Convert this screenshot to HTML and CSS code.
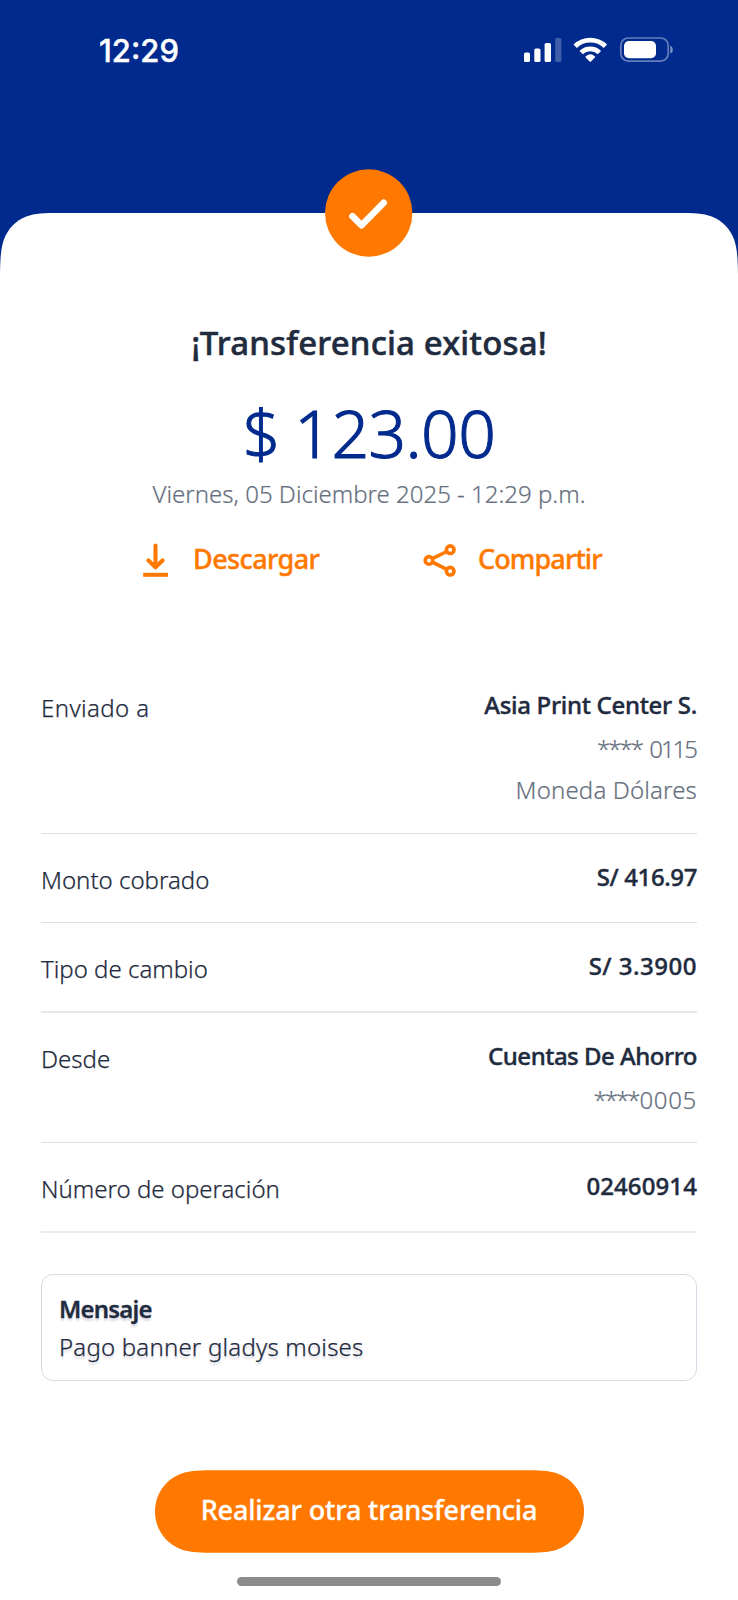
FILE: index.html
```html
<!DOCTYPE html>
<html lang="es">
<head>
<meta charset="utf-8">
<title>Transferencia exitosa</title>
<link rel="stylesheet" href="styles.css">
</head>
<body>
<div class="screen">
  <header class="header">
    <div class="status">
      <span class="time">12:29</span>
      <svg class="status-icons" width="152" height="28" viewBox="0 0 152 28">
        <g fill="#fff">
          <rect x="1" y="15.5" width="6" height="9.5" rx="1.6"/>
          <rect x="11.300" y="11.500" width="6.200" height="13.500" rx="1.600"/>
          <rect x="21.600" y="6" width="6.400" height="19" rx="1.600"/>
          <rect x="32.200" y="1" width="6.200" height="24" rx="1.600" opacity=".25"/>
          <path d="M68 24.400a1 1 0 0 1-1.400 0l-3.900-3.900a.9.900 0 0 1 .1-1.300 7.100 7.100 0 0 1 9 0 .9.900 0 0 1 .1 1.300z"/>
        </g>
        <g fill="none" stroke="#fff" stroke-width="4.800">
          <path d="M52.200 9.300a21.700 21.700 0 0 1 30.200 0"/>
          <path d="M58.200 15.600a13 13 0 0 1 18.200 0"/>
        </g>
        <rect x="97.800" y="1" width="47.400" height="23.200" rx="7.600" fill="none" stroke="#fff" stroke-opacity=".4" stroke-width="1.700"/>
        <rect x="101" y="4" width="32" height="17.200" rx="5" fill="#fff"/>
        <path d="M147.300 8.800c1.600.500 2.500 2 2.500 3.900s-.9 3.400-2.500 3.900z" fill="#fff" opacity=".5"/>
      </svg>
    </div>
  </header>
  <main class="sheet">
    <div class="sheet-top">
      <svg width="738" height="62" viewBox="0 0 738 62">
        <path fill="#fff" d="M0 62V61C.3 43.500 1 34.700 4 26.300 7.800 15.900 15.900 7.300 26.300 3.500 35.200 .3 43.500 0 61 0H677C694.500 0 702.800 .3 711.700 3.500 722.100 7.300 730.200 15.900 734 26.300 737 34.700 737.700 43.500 738 61V62z"/>
      </svg>
      <svg class="badge" width="88" height="88" viewBox="0 0 88 88">
        <circle cx="43.700" cy="44" r="43.700" fill="#ff7800"/>
        <path d="M27.400 47.200L36.600 56.300 58.700 33.800" fill="none" stroke="#fff" stroke-width="6.600" stroke-linecap="round" stroke-linejoin="round"/>
      </svg>
    </div>
    <h1 class="title">¡Transferencia exitosa!</h1>
    <p class="amount">$ 123.00</p>
    <p class="date">Viernes, 05 Diciembre 2025 - 12:29 p.m.</p>
    <div class="actions">
      <div class="action">
        <svg width="26" height="37" viewBox="0 -1 26 37" fill="none" stroke="#ff7800" stroke-width="4" stroke-linecap="round" stroke-linejoin="round">
          <path d="M12.500 4.500V25.500M5.300 19.300L12.500 26.300 19.700 19.300"/><path stroke-linecap="butt" d="M.2 33.800H25"/>
        </svg>
        <span class="action-text save">Descargar</span>
      </div>
      <div class="action">
        <svg width="34" height="37" viewBox="0 -1 34 37" fill="none" stroke="#ff7800" stroke-width="3.600">
          <circle cx="6" cy="19.400" r="3.800"/><circle cx="27.200" cy="8.700" r="3.800"/><circle cx="27.200" cy="30.200" r="3.800"/>
          <path d="M9.300 17.600L23.800 10.500M9.300 21.200L23.800 28.400"/>
        </svg>
        <span class="action-text share">Compartir</span>
      </div>
    </div>
    <section class="details">
      <div class="row row-three">
        <span class="label l-to">Enviado a</span>
        <div class="values"><b class="value v-name">Asia Print Center S.</b><span class="sub"><span class="mask">****</span> <span class="s-acct">0115</span></span><span class="sub s-cur">Moneda Dólares</span></div>
      </div>
      <div class="row"><span class="label l-amt">Monto cobrado</span><div class="values"><b class="value v-amt">S/ 416.97</b></div></div>
      <div class="row row-rate"><span class="label">Tipo de cambio</span><div class="values"><b class="value v-rate">S/ 3.3900</b></div></div>
      <div class="row row-two">
        <span class="label l-from">Desde</span>
        <div class="values"><b class="value v-from">Cuentas De Ahorro</b><span class="sub"><span class="mask">****</span><span class="s-from">0005</span></span></div>
      </div>
      <div class="row row-last"><span class="label">Número de operación</span><div class="values"><b class="value v-op">02460914</b></div></div>
    </section>
    <section class="message">
      <b class="message-title">Mensaje</b>
      <span class="message-text">Pago banner gladys moises</span>
    </section>
    <button class="again">
      <svg class="again-shape" width="429" height="83" viewBox="0 0 429 83"><path fill="#ff7800" d="M62 .3C46 .3 36 .3 26 3.800 10 10 0 24.500 0 41.500S10 73 26 79.200C36 82.700 46 82.700 62 82.700H367C383 82.700 393 82.700 403 79.200 419 73 429 58.500 429 41.500S419 10 403 3.800C393 .3 383 .3 367 .3z"/></svg>
      <span class="again-text">Realizar otra transferencia</span>
    </button>
    <div class="home"></div>
  </main>
</div>
</body>
</html>
```
FILE: styles.css
```css
* { box-sizing: border-box; }
body { margin: 0; background: #fff; font-family: "Noto Sans", "Open Sans", sans-serif; color: #1f2b3e; }
h1, p { margin: 0; }
svg { display: block; flex: none; }
.screen { width: 738px; height: 1600px; overflow: hidden; background: #002a8d; }
.header { height: 213px; padding-top: 37px; }
.status { display: flex; justify-content: space-between; align-items: flex-start; padding: 0 63px 0 99px; }
.time { font: 500 31px/28px Inter, sans-serif; -webkit-text-stroke: .4px; color: #fff; }
.sheet { display: flex; flex-direction: column; align-items: center; height: 1387px; background: #fff; }
.sheet-top { position: relative; width: 738px; height: 62px; background: #002a8d; }
.badge { position: absolute; left: 325px; top: -44px; }
.title { margin-top: 46px; font-size: 33px; font-weight: 500; line-height: 44px; letter-spacing: .15px; -webkit-text-stroke: .5px; white-space: nowrap; }
.amount { margin-top: 27px; font-size: 66px; font-weight: 300; line-height: 80px; letter-spacing: -.6px; word-spacing: -2px; -webkit-text-stroke: 1px; color: #002a8d; white-space: nowrap; }
.date { margin-top: 6px; font-size: 24px; font-weight: 300; line-height: 32px; letter-spacing: 0; -webkit-text-stroke: .2px; color: #667080; white-space: nowrap; }
.actions { display: flex; width: 738px; margin-top: 30px; padding-left: 143px; color: #ff7800; }
.action { display: flex; gap: 24px; width: 280px; height: 38px; }
.action:last-child { gap: 21px; }
.action-text { padding-top: 1px; font-size: 27px; font-weight: 500; line-height: 36px; letter-spacing: -.6px; -webkit-text-stroke: .4px; white-space: nowrap; }
.share { letter-spacing: -.9px; }
.details { width: 656px; margin-top: 84px; }
.row { display: flex; justify-content: space-between; height: 89px; padding-top: 27px; border-bottom: 1px solid #e0e0e3; font-size: 24px; line-height: 32px; white-space: nowrap; }
.row-three { height: 172px; }
.row-rate { height: 90px; border-bottom: 2px solid #e8e8ea; }
.row-two { height: 130px; }
.row-last { height: 90px; border-bottom: 2px solid #ececee; }
.label { padding-top: 3px; font-weight: 300; -webkit-text-stroke: .25px; }
.l-to { letter-spacing: .4px; }
.l-amt { letter-spacing: 0; }
.values { display: flex; flex-direction: column; align-items: flex-end; }
.value { font-weight: 500; -webkit-text-stroke: .4px; }
.v-name { letter-spacing: -.3px; }
.v-amt { letter-spacing: -.4px; }
.v-rate { letter-spacing: .5px; }
.v-from { letter-spacing: -.5px; }
.v-op { letter-spacing: .1px; }
.sub { margin-top: 12px; font-weight: 300; -webkit-text-stroke: .2px; color: #667080; }
.sub + .sub { margin-top: 9px; letter-spacing: .15px; }
.value + .sub { margin-top: 12px; letter-spacing: 0; }
.mask { letter-spacing: -2px; }
.s-acct { margin-left: 1px; letter-spacing: -2px; margin-right: 1px; }
.s-from { margin-left: 1px; letter-spacing: .7px; }
.message { display: flex; flex-direction: column; align-items: flex-start; width: 656px; height: 107px; margin-top: 41px; padding: 18px 17px; border: 1px solid #d5dae5; border-radius: 12px; font-size: 24px; line-height: 32px; text-shadow: 0 3px 2px rgba(60, 50, 120, .18); white-space: nowrap; }
.message-title { font-weight: 600; letter-spacing: -.8px; -webkit-text-stroke: .3px; }
.message-text { margin-top: 6px; font-weight: 300; letter-spacing: .2px; -webkit-text-stroke: .25px; }
.again { position: relative; display: flex; justify-content: center; width: 429px; height: 83px; margin-top: 89px; padding: 22px 0 0; border: 0; background: none; color: #fff; font: 500 27px/36px "Noto Sans", sans-serif; letter-spacing: -.15px; -webkit-text-stroke: .3px; white-space: nowrap; }
.again-shape { position: absolute; left: 0; top: 0; }
.again-text { position: relative; }
.home { width: 264px; height: 9px; margin-top: 24px; border-radius: 5px; background: #8b8b8b; }
```
